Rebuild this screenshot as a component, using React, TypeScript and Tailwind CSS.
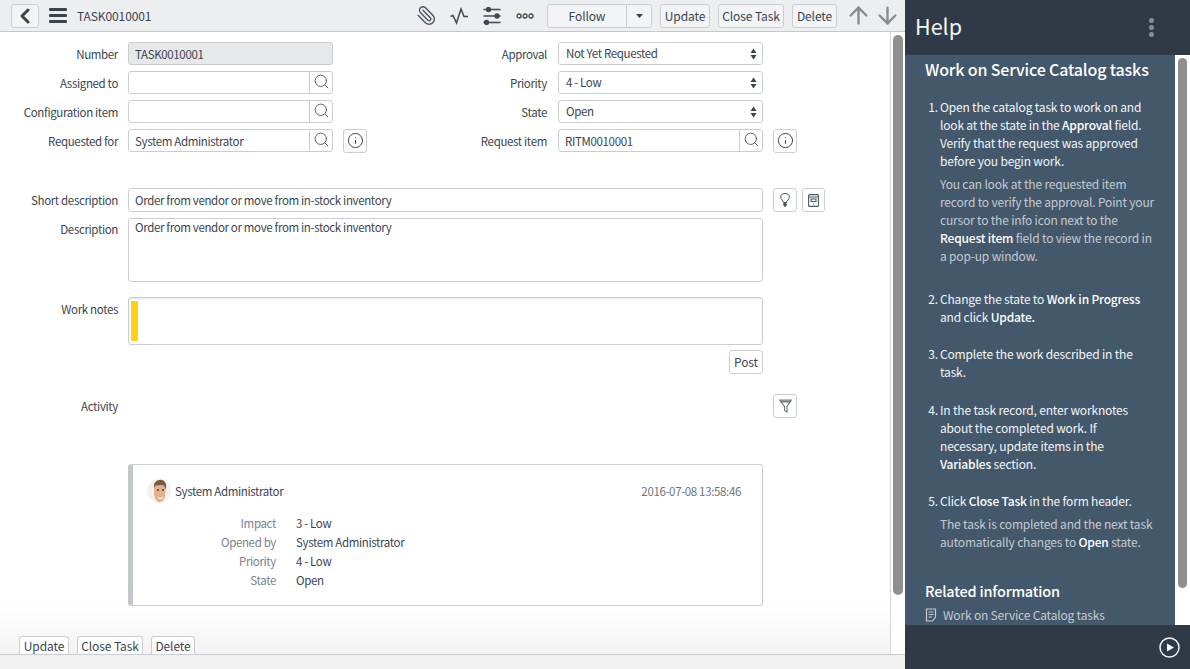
import React from "react";
import { ChevronLeft, Search, Info, ArrowUp, ArrowDown, Paperclip } from "lucide-react";

const text = "text-[11.5px] tracking-[-0.35px] leading-[18px]";
const input = `h-[23px] rounded-[3px] border border-[#c9cdd1] px-[6px] flex items-center text-[#3a444f] ${text}`;
const button = "rounded-[3px] border border-[#c9cdd1] flex items-center justify-center text-[12px] tracking-[-0.1px] leading-[18px] text-[#3a444f]";

function IconBtn({ children, narrow }: { children: React.ReactNode; narrow?: boolean }) {
  return <div className={`${button} ${narrow ? "w-[23px]" : "w-[24px]"} h-[24px] bg-white shrink-0`}>{children}</div>;
}

function Label({ children, wide }: { children: React.ReactNode; wide?: boolean }) {
  return (
    <div className={`w-[118px] shrink-0 text-right text-[#3a444f] ${text} ${wide ? "mr-[11px]" : "mr-[10px]"}`}>
      {children}
    </div>
  );
}

function Lookup({ value, info }: { value?: string; info?: boolean }) {
  return (
    <div className="flex items-center">
      <div className={`${input} w-[205px] pr-0 justify-between bg-white`}>
        <span>{value}</span>
        <div className="w-[23px] h-full border-l border-[#c9cdd1] flex items-center justify-center">
          <Search size={17} strokeWidth={1.3} className="text-[#4b5560] -mt-[2px]" />
        </div>
      </div>
      {info && (
        <div className="ml-[10px]">
          <IconBtn>
            <Info size={17} strokeWidth={1.4} className="text-[#3a444f]" />
          </IconBtn>
        </div>
      )}
    </div>
  );
}

function Select({ value }: { value: string }) {
  return (
    <div className={`${input} w-[205px] pl-[7px] justify-between bg-white`}>
      <span className="-mt-[2px]">{value}</span>
      <svg width="7" height="12" viewBox="0 0 7 12" className="fill-[#3a444f] mr-[-1px]">
        <path d="M3.500 0.500 6.500 5H0.500Z" />
        <path d="M3.500 11.500 0.500 7H6.500Z" />
      </svg>
    </div>
  );
}

function Row({ left, right }: { left: React.ReactNode; right: React.ReactNode }) {
  return (
    <div className="flex items-center h-[23px]">
      <div className="w-[429px] flex items-center shrink-0">{left}</div>
      <div className="flex items-center">{right}</div>
    </div>
  );
}

function Pair({ label, wide, children }: { label: string; wide?: boolean; children: React.ReactNode }) {
  return (
    <>
      <Label wide={wide}>{label}</Label>
      {children}
    </>
  );
}

function PulseIcon() {
  return (
    <svg width="18" height="18" viewBox="0 0 18 18" fill="none" stroke="#3f4953" strokeWidth="1.500">
      <path d="M0.500 9.500 3 8.500 6.500 16 11 2 14 9.500 18 9.500" />
    </svg>
  );
}

function SlidersIcon() {
  return (
    <svg width="18" height="18" viewBox="0 0 18 18" fill="none" stroke="#3f4953" strokeWidth="1.300">
      <path d="M0.500 2.500H17.500M0.500 9H17.500M0.500 15.500H17.500" />
      <circle cx="5.500" cy="2.500" r="2" fill="#3f4953" />
      <circle cx="14" cy="9" r="2" fill="#3f4953" />
      <circle cx="3.500" cy="15.500" r="2" fill="#3f4953" />
    </svg>
  );
}

function DotsIcon() {
  return (
    <svg width="18" height="6" viewBox="0 0 18 6" fill="none" stroke="#3f4953" strokeWidth="1.300">
      <circle cx="3" cy="3" r="2" />
      <circle cx="9" cy="3" r="2" />
      <circle cx="15" cy="3" r="2" />
    </svg>
  );
}

function Header() {
  return (
    <div className="h-[32px] shrink-0 bg-[#eceeef] border-b border-[#c6c9cc] flex items-center pl-[11px] text-[12px] tracking-[-0.1px] leading-[18px] text-[#3a444f]">
      <div className={`${button} h-[24px] w-[28px] bg-[#f3f4f5]`}>
        <ChevronLeft size={24} strokeWidth={3} className="text-[#3a444f]" />
      </div>
      <div className="ml-[10px] w-[18px] flex flex-col gap-[3px]">
        <div className="h-[3px] bg-[#3a444f] rounded-[1px]" />
        <div className="h-[3px] bg-[#3a444f] rounded-[1px]" />
        <div className="h-[3px] bg-[#3a444f] rounded-[1px]" />
      </div>
      <div className="ml-[10px] w-[339px]">TASK0010001</div>
      <Paperclip size={21} strokeWidth={1.6} className="text-[#4b5560] -scale-x-100" />
      <div className="ml-[13px] flex"><PulseIcon /></div>
      <div className="ml-[15px] flex"><SlidersIcon /></div>
      <div className="ml-[15px] flex"><DotsIcon /></div>
      <div className={`${button} h-[24px] ml-[13px] w-[105px] bg-[#f3f4f5]`}>
        <div className="w-[79px] h-full flex items-center justify-center border-r border-[#c9cdd1]">Follow</div>
        <div className="flex-1 flex items-center justify-center">
          <svg width="7" height="4" viewBox="0 0 7 4" className="fill-[#3a444f]"><path d="M0 0H7L3.500 4Z" /></svg>
        </div>
      </div>
      <div className={`${button} h-[24px] ml-[8px] w-[50px] bg-[#f3f4f5]`}>Update</div>
      <div className={`${button} h-[24px] ml-[8px] w-[66px] bg-[#f3f4f5]`}>Close Task</div>
      <div className={`${button} h-[24px] ml-[8px] w-[45px] bg-[#f3f4f5]`}>Delete</div>
      <ArrowUp size={27} strokeWidth={2.1} className="ml-[8px] text-[#868b90]" />
      <ArrowDown size={27} strokeWidth={2.1} className="ml-[2px] text-[#868b90]" />
    </div>
  );
}

function Avatar() {
  return (
    <svg width="24" height="26" viewBox="0 0 24 26" className="shrink-0">
      <circle cx="12" cy="13" r="12" fill="#f1f1ef" />
      <path d="M7 9C7 4 11 2 14 2.500 18 3 19 7 18.500 11L18 19C17 23 14 24.500 12 24 9 23.500 7.500 20 7 16Z" fill="#e2b08f" />
      <path d="M7 10C6 4 11 1 15 2 19 3 20 8 18.500 12 18 8 17 7 14 7 11 7.500 9 7 8 8Z" fill="#7a5a3c" />
      <path d="M10 18C12 20.500 15 20.500 17 18L15 21H12Z" fill="#fff" />
      <circle cx="11" cy="12" r="0.900" fill="#3d2c22" />
      <circle cx="16" cy="12" r="0.900" fill="#3d2c22" />
    </svg>
  );
}

function Activity() {
  const rows = [
    ["Impact", "3 - Low"],
    ["Opened by", "System Administrator"],
    ["Priority", "4 - Low"],
    ["State", "Open"],
  ];
  return (
    <div className="ml-[128px] mt-[46px] w-[635px] h-[142px] shrink-0 rounded-[3px] border border-[#c9cdd1] border-l-[5px] border-l-[#c3c7cb] bg-white pl-[14px] pr-[21px] pt-[13px]">
      <div className={`flex items-center justify-between h-[26px] ${text}`}>
        <div className="flex items-center gap-[4px] text-[#3a444f]">
          <Avatar />
          <span>System Administrator</span>
        </div>
        <span className="text-[#6b747c]">2016-07-08 13:58:46</span>
      </div>
      <div className="mt-[9px] ml-[1px] flex flex-col">
        {rows.map(([k, v]) => (
          <div key={k} className={`flex h-[19px] items-center ${text}`}>
            <div className="w-[128px] text-right text-[#7a828a]">{k}</div>
            <div className="ml-[20px] text-[#3a444f]">{v}</div>
          </div>
        ))}
      </div>
    </div>
  );
}

function Form() {
  return (
    <div className="flex-1 min-w-0 flex flex-col pt-[10px] overflow-hidden bg-gradient-to-b from-white from-[92%] to-[#f3f3f3]">
      <div className="flex flex-col gap-[6px]">
        <Row
          left={<Pair label="Number"><div className={`${input} w-[205px] bg-[#e6e8ea]`}>TASK0010001</div></Pair>}
          right={<Pair wide label="Approval"><Select value="Not Yet Requested" /></Pair>}
        />
        <Row
          left={<Pair label="Assigned to"><Lookup /></Pair>}
          right={<Pair wide label="Priority"><Select value="4 - Low" /></Pair>}
        />
        <Row
          left={<Pair label="Configuration item"><Lookup /></Pair>}
          right={<Pair wide label="State"><Select value="Open" /></Pair>}
        />
        <Row
          left={<Pair label="Requested for"><Lookup value="System Administrator" info /></Pair>}
          right={<Pair wide label="Request item"><Lookup value="RITM0010001" info /></Pair>}
        />
      </div>

      <div className="mt-[36px] flex items-center h-[24px]">
        <Label>Short description</Label>
        <div className={`${input} w-[635px] h-[24px] bg-white`}>Order from vendor or move from in-stock inventory</div>
        <div className="ml-[10px]">
          <IconBtn>
            <svg width="10" height="14" viewBox="0 0 10 14" fill="none" stroke="#4b5560" strokeWidth="1">
              <path d="M3.500 9.500C3.500 7.500 0.700 6.500 0.700 4.200A4.300 3.700 0 0 1 9.300 4.200C9.300 6.500 6.500 7.500 6.500 9.500Z" />
              <path d="M3.800 10.500H6.200V12.500L5 13.500 3.800 12.500Z" fill="#4b5560" />
            </svg>
          </IconBtn>
        </div>
        <div className="ml-[5px]">
          <IconBtn narrow>
            <svg width="11" height="13" viewBox="0 0 11 13" fill="none" stroke="#4b5560" strokeWidth="1.100">
              <rect x="0.600" y="0.600" width="9.800" height="11.800" rx="1" />
              <path d="M0.600 3H10.400M3 5H8V7.500H3Z" />
              <path d="M5 10H6" />
            </svg>
          </IconBtn>
        </div>
      </div>

      <div className="mt-[6px] flex items-start">
        <div className="pt-[2px]"><Label>Description</Label></div>
        <div className={`w-[635px] h-[64px] rounded-[3px] border border-[#c9cdd1] px-[6px] text-[#3a444f] text-[11.5px] tracking-[-0.35px] leading-[17px]`}>
          Order from vendor or move from in-stock inventory
        </div>
      </div>

      <div className="mt-[15px] flex items-start">
        <div className="pt-[3px]"><Label>Work notes</Label></div>
        <div className="w-[635px] h-[48px] rounded-[3px] border border-[#c9cdd1] shadow-[inset_0_1px_2px_#e2e4e6] p-[3px] pl-[2px]">
          <div className="w-[7px] h-full bg-[#fcd116]" />
        </div>
      </div>

      <div className="mt-[5px] flex justify-end w-[763px] shrink-0">
        <div className={`${button} h-[24px] w-[34px] bg-white`}>Post</div>
      </div>

      <div className="mt-[20px] flex items-center h-[24px] shrink-0">
        <Label>Activity</Label>
        <div className="w-[635px]" />
        <div className="ml-[10px]">
          <IconBtn>
            <svg width="13" height="14" viewBox="0 0 13 14" fill="none" stroke="#6a727a" strokeWidth="1.100">
              <path d="M0.700 1H12.300L8 7.500V13L5.500 11.500V7.500Z" />
              <path d="M1.500 2.500H11.500" strokeWidth="1.800" />
            </svg>
          </IconBtn>
        </div>
      </div>

      <Activity />

      <div className="mt-[30px] ml-[19px] flex gap-[8px] shrink-0">
        <div className={`${button} h-[18px] border-b-0 rounded-b-none w-[50px] bg-white`}>Update</div>
        <div className={`${button} h-[18px] border-b-0 rounded-b-none w-[66px] bg-white`}>Close Task</div>
        <div className={`${button} h-[18px] border-b-0 rounded-b-none w-[44px] bg-white`}>Delete</div>
      </div>
    </div>
  );
}

function B({ children }: { children: React.ReactNode }) {
  return <span className="font-medium text-white">{children}</span>;
}

function Step({ n, children, note, mb }: { n: number; children: React.ReactNode; note?: React.ReactNode; mb: string }) {
  return (
    <div className={`flex ${mb}`}>
      <div className="w-[14px] shrink-0 text-right">{n}.</div>
      <div className="ml-[2px]">
        <div>{children}</div>
        {note && <div className="mt-[5px] text-[#c3cad1]">{note}</div>}
      </div>
    </div>
  );
}

function Help() {
  return (
    <div className="w-[285px] shrink-0 flex flex-col bg-[#44586b] text-[#f2f4f6]">
      <div className="h-[55px] shrink-0 bg-[#2f3a46] flex items-center justify-between pl-[10px] pr-[36px]">
        <span className="text-[21.5px] leading-[32px] -mt-[4px] text-[#f2f4f6]">Help</span>
        <div className="flex flex-col gap-[2px]">
          <div className="w-[5px] h-[5px] rounded-full bg-[#858c93]" />
          <div className="w-[5px] h-[5px] rounded-full bg-[#858c93]" />
          <div className="w-[5px] h-[5px] rounded-full bg-[#858c93]" />
        </div>
      </div>
      <div className="flex-1 min-h-0 flex">
        <div className="flex-1 min-w-0 pl-[20px] pt-[2px] overflow-hidden text-[12px] tracking-[-0.18px] leading-[18px]">
          <div className="text-[16px] tracking-[-0.15px] leading-[24px] font-medium text-white">Work on Service Catalog tasks</div>
          <div className="mt-[17px] ml-[-1px]">
            <Step
              n={1}
              mb="mb-[25px]"
              note={<>You can look at the requested item<br />record to verify the approval. Point your<br />cursor to the info icon next to the<br /><B>Request item</B> field to view the record in<br />a pop-up window.</>}
            >
              Open the catalog task to work on and<br />look at the state in the <B>Approval</B> field.<br />Verify that the request was approved<br />before you begin work.
            </Step>
            <Step n={2} mb="mb-[19px]">
              Change the state to <B>Work in Progress</B><br />and click <B>Update.</B>
            </Step>
            <Step n={3} mb="mb-[20px]">
              Complete the work described in the<br />task.
            </Step>
            <Step n={4} mb="mb-[19px]">
              In the task record, enter worknotes<br />about the completed work. If<br />necessary, update items in the<br /><B>Variables</B> section.
            </Step>
            <Step
              n={5}
              mb="mb-[29px]"
              note={<>The task is completed and the next task<br />automatically changes to <B>Open</B> state.</>}
            >
              Click <B>Close Task</B> in the form header.
            </Step>
          </div>
          <div className="text-[14.5px] tracking-[-0.2px] leading-[22px] font-medium text-white">Related information</div>
          <div className="mt-[4px] flex items-center gap-[6px] text-[#c3cad1] whitespace-nowrap">
            <svg width="12" height="14" viewBox="0 0 12 14" fill="none" stroke="#c3cad1" strokeWidth="1.200">
              <path d="M1.500 1H10.500V9L7.500 13H1.500Z" />
              <path d="M3.500 4H8.500M3.500 6.500H8.500M3.500 9H7" />
            </svg>
            Work on Service Catalog tasks
          </div>
        </div>
        <div className="w-[15px] shrink-0 bg-white px-[3px] pt-[3px]">
          <div className="h-[530px] rounded-full bg-[#8f8f8f]" />
        </div>
      </div>
      <div className="h-[44px] shrink-0 bg-[#2f3a46] flex items-center justify-end pr-[10px]">
        <svg width="21" height="21" viewBox="0 0 21 21" fill="none">
          <circle cx="10.500" cy="10.500" r="9.500" stroke="#f2f4f6" strokeWidth="1.500" />
          <path d="M8 6.500 15 10.500 8 14.500Z" fill="#f2f4f6" />
        </svg>
      </div>
    </div>
  );
}

export default function App() {
  return (
    <div className="w-[1190px] h-[669px] flex overflow-hidden bg-white font-['Noto_Sans_CJK_SC','Lato',sans-serif]">
      <div className="w-[905px] shrink-0 flex flex-col min-h-0">
        <Header />
        <div className="flex-1 min-h-0 flex">
          <Form />
          <div className="w-[15px] shrink-0 border-l border-[#d4d6d8] bg-white pl-[2px] pr-[2px] pt-[3px]">
            <div className="h-[560px] rounded-full bg-[#8f8f8f]" />
          </div>
        </div>
        <div className="h-[15px] shrink-0 bg-[#f0f0f0] border-t border-[#c9cdd1]" />
      </div>
      <Help />
    </div>
  );
}
